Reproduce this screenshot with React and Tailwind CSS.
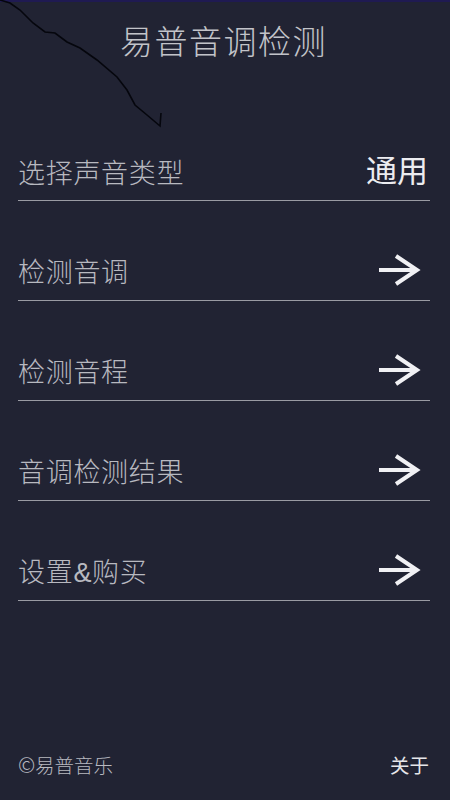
const rows = ['检测音调', '检测音程', '音调检测结果', '设置&购买']

const cjk = "font-['Liberation_Sans','Noto_Sans_CJK_SC',sans-serif]"

function ArrowIcon() {
  return (
    <svg width="44" height="34" viewBox="0 0 44 34" fill="none" stroke="#f1f1f4" strokeWidth="4">
      <path d="M1 17H39" />
      <path d="M18 3L39 17L18 31" />
    </svg>
  )
}

export default function App() {
  return (
    <div className={`relative flex flex-col w-[450px] h-[800px] overflow-hidden bg-[#212333] ${cjk}`}>
      <div className="h-[2px] bg-[#1f1a52]" />
      <h1 className="mt-[18px] h-[46px] pr-[3px] text-center text-[33px] leading-[46px] font-light tracking-[1.5px] text-[#c2c3c9]">
        易普音调检测
      </h1>

      <div className="flex flex-col mt-[71px] mr-[20px] ml-[18px]">
        <div className="flex items-center justify-between h-[64px] border-b border-[#9a9ba3]">
          <span className="pt-[10px] text-[27px] leading-[36px] font-light tracking-[0.7px] text-[#b8b9c0]">选择声音类型</span>
          <span className="pt-[6px] mr-[2px] text-[31px] leading-[40px] text-[#ececf0]">通用</span>
        </div>
        {rows.map((label) => (
          <div key={label} className="flex items-center justify-between h-[100px] pt-[38px] border-b border-[#9a9ba3]">
            <span className="pt-[6px] text-[27px] leading-[36px] font-light tracking-[0.7px] text-[#b8b9c0]">{label}</span>
            <span className="mr-[8px]"><ArrowIcon /></span>
          </div>
        ))}
      </div>

      <div className="flex items-center justify-between mt-auto mb-[20px] mr-[20px] ml-[18px] h-[26px]">
        <span className="text-[19.5px] font-light text-[#b8b9c0]">
          <span className="font-['Noto_Sans_CJK_SC',sans-serif] inline-block w-[17px] text-[21px] leading-none">©</span>易普音乐
        </span>
        <span className="mr-[1px] text-[19.5px] text-[#e6e6ea]">关于</span>
      </div>

      {/* hand drawn line over the header */}
      <svg className="absolute top-0 left-0" width="170" height="135" viewBox="0 0 170 135" fill="none" stroke="#05060d" strokeWidth="1.6">
        <path d="M0 0L10 3L20 10L33 23L45 32L55 33L67 42L80 48L97 60L117 77L127 90L135 105L147 115L160 126L161 113" />
      </svg>
    </div>
  )
}
